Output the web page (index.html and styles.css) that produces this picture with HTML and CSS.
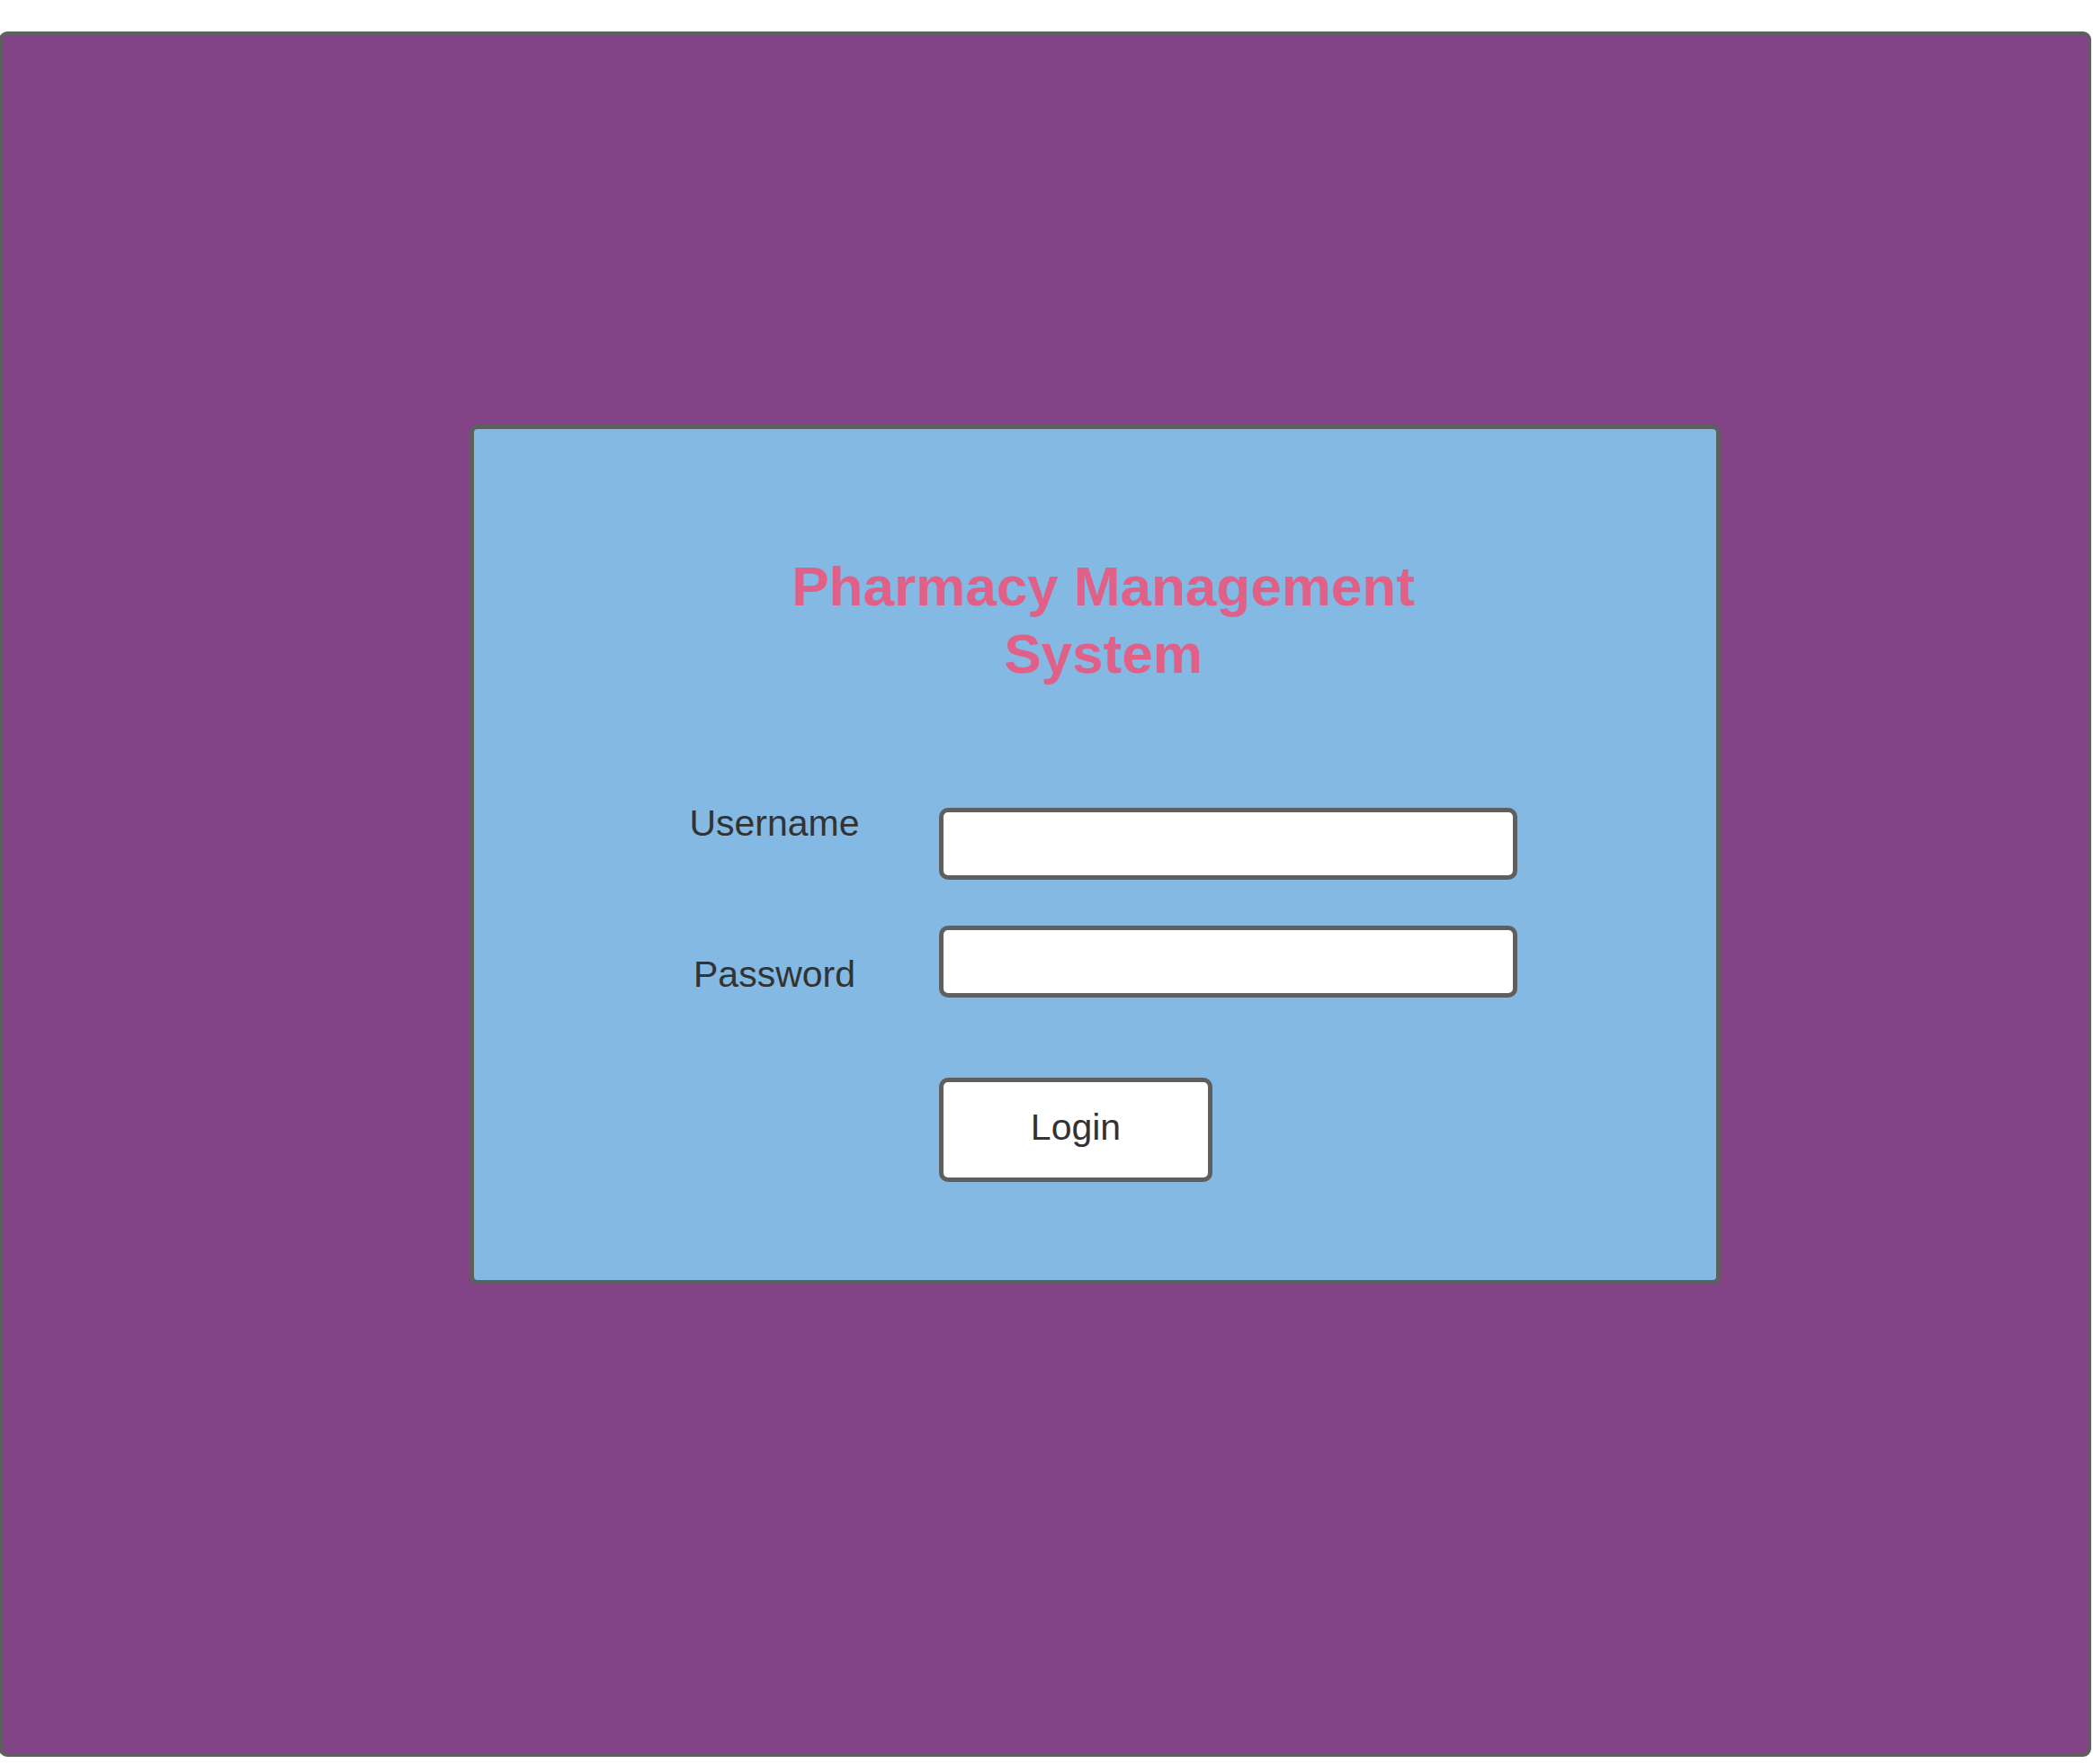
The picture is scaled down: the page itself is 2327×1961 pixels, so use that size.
FILE: index.html
```html
<!DOCTYPE html>
<html lang="en">
<head>
<meta charset="utf-8">
<title>Pharmacy Management System</title>
<link rel="stylesheet" href="styles.css">
</head>
<body>
<div class="frame">
  <div class="card">
    <h1 class="title">Pharmacy Management<br>System</h1>
    <form class="form">
      <div class="row row-user">
        <label class="label label-user" for="username">Username</label>
        <input class="field" id="username" type="text">
      </div>
      <div class="row row-pass">
        <label class="label label-pass" for="password">Password</label>
        <input class="field" id="password" type="password">
      </div>
      <div class="row row-btn">
        <span class="label-spacer"></span>
        <button class="btn" type="button">Login</button>
      </div>
    </form>
  </div>
</div>
</body>
</html>
```

FILE: styles.css
```css
html, body {
  margin: 0;
  padding: 0;
  background: #ffffff;
}

body {
  font-family: "Liberation Sans", Arial, sans-serif;
  color: #333333;
}

.frame {
  box-sizing: border-box;
  margin: 35px 0 0 -1px;
  width: 2326px;
  height: 1918px;
  background: #834387;
  border: 4px solid #5f5f5f;
  border-radius: 9px;
  padding: 433px 0 0 519px;
}

.card {
  box-sizing: border-box;
  width: 1391px;
  height: 956px;
  background: #83b9e3;
  border: 5px solid #5f5f5f;
  border-radius: 9px;
  padding: 137px 0 0 0;
}

.title {
  margin: 0;
  padding-left: 18px;
  text-align: center;
  font-size: 62px;
  line-height: 75px;
  font-weight: bold;
  color: #e06087;
}

.form {
  margin: 134px 0 0 209px;
  display: flex;
  flex-direction: column;
}

.row {
  display: flex;
  align-items: flex-start;
  gap: 58px;
}

.row-pass {
  margin-top: 51px;
}

.row-btn {
  margin-top: 89px;
}

.label,
.label-spacer {
  width: 250px;
  flex: none;
  text-align: center;
  font-size: 41px;
  line-height: 47px;
  color: #333333;
}

.label-user {
  margin-top: -6px;
}

.label-pass {
  margin-top: 31px;
}

.field {
  box-sizing: border-box;
  width: 643px;
  height: 80px;
  margin: 0;
  background: #ffffff;
  border: 5px solid #5f5f5f;
  border-radius: 10px;
  outline: none;
  padding: 0 12px;
  font-size: 30px;
}

.btn {
  box-sizing: border-box;
  width: 304px;
  height: 116px;
  margin: 0;
  padding: 0 0 5px 0;
  background: #ffffff;
  border: 5px solid #5f5f5f;
  border-radius: 10px;
  font-family: "Liberation Sans", Arial, sans-serif;
  font-size: 41px;
  color: #333333;
  display: flex;
  align-items: center;
  justify-content: center;
}
```
